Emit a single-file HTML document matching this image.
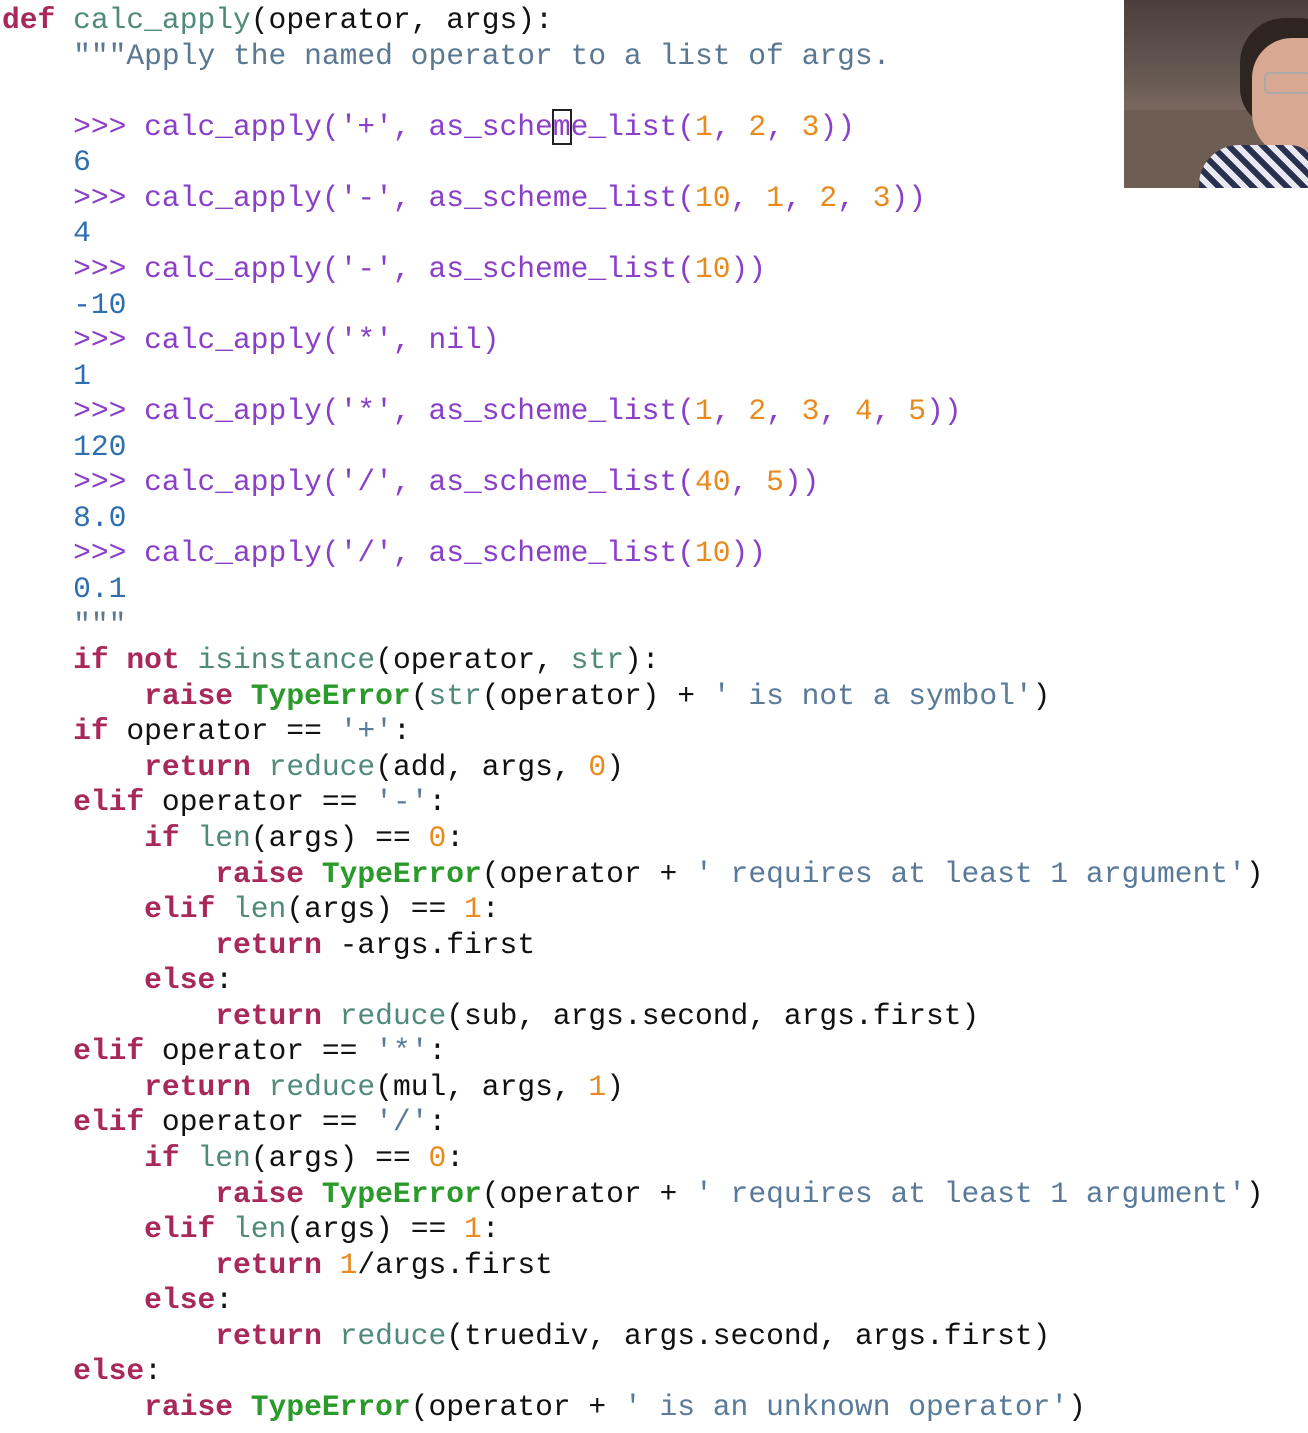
<!DOCTYPE html>
<html><head><meta charset="utf-8"><style>
html,body{margin:0;padding:0;background:#fff;}
body{width:1308px;height:1433px;overflow:hidden;position:relative;}
pre{margin:0;position:absolute;left:2px;top:3px;font-family:"Liberation Mono",monospace;font-size:29.62px;line-height:35.56px;color:#111;}
.k{color:#a8285a;font-weight:bold}
.f{color:#4f8a7a}
.d{color:#5a7892}
.p{color:#8a3fc8}
.o{color:#2e6fb0}
.n{color:#e88a1e}
.t{color:#2a9a2a;font-weight:bold}
.s{color:#5a7a9a}
.cur{outline:2px solid #222;outline-offset:-1px}
#cam{position:absolute;left:1124px;top:0;width:184px;height:188px;overflow:hidden;background:linear-gradient(180deg,#4a3f3c 0%,#6a5c55 45%,#7b6a60 60%,#6b5a50 100%);}
</style></head><body>
<pre><span class="k">def</span> <span class="f">calc_apply</span>(operator, args):
    <span class="d">"""Apply the named operator to a list of args.</span>

    <span class="p">&gt;&gt;&gt; calc_apply('+', as_sche<span class="cur">m</span>e_list(</span><span class="n">1</span><span class="p">, </span><span class="n">2</span><span class="p">, </span><span class="n">3</span><span class="p">))</span>
    <span class="o">6</span>
    <span class="p">&gt;&gt;&gt; calc_apply('-', as_scheme_list(</span><span class="n">10</span><span class="p">, </span><span class="n">1</span><span class="p">, </span><span class="n">2</span><span class="p">, </span><span class="n">3</span><span class="p">))</span>
    <span class="o">4</span>
    <span class="p">&gt;&gt;&gt; calc_apply('-', as_scheme_list(</span><span class="n">10</span><span class="p">))</span>
    <span class="o">-10</span>
    <span class="p">&gt;&gt;&gt; calc_apply('*', nil)</span>
    <span class="o">1</span>
    <span class="p">&gt;&gt;&gt; calc_apply('*', as_scheme_list(</span><span class="n">1</span><span class="p">, </span><span class="n">2</span><span class="p">, </span><span class="n">3</span><span class="p">, </span><span class="n">4</span><span class="p">, </span><span class="n">5</span><span class="p">))</span>
    <span class="o">120</span>
    <span class="p">&gt;&gt;&gt; calc_apply('/', as_scheme_list(</span><span class="n">40</span><span class="p">, </span><span class="n">5</span><span class="p">))</span>
    <span class="o">8.0</span>
    <span class="p">&gt;&gt;&gt; calc_apply('/', as_scheme_list(</span><span class="n">10</span><span class="p">))</span>
    <span class="o">0.1</span>
    <span class="d">"""</span>
    <span class="k">if</span> <span class="k">not</span> <span class="f">isinstance</span>(operator, <span class="f">str</span>):
        <span class="k">raise</span> <span class="t">TypeError</span>(<span class="f">str</span>(operator) + <span class="s">' is not a symbol'</span>)
    <span class="k">if</span> operator == <span class="s">'+'</span>:
        <span class="k">return</span> <span class="f">reduce</span>(add, args, <span class="n">0</span>)
    <span class="k">elif</span> operator == <span class="s">'-'</span>:
        <span class="k">if</span> <span class="f">len</span>(args) == <span class="n">0</span>:
            <span class="k">raise</span> <span class="t">TypeError</span>(operator + <span class="s">' requires at least 1 argument'</span>)
        <span class="k">elif</span> <span class="f">len</span>(args) == <span class="n">1</span>:
            <span class="k">return</span> -args.first
        <span class="k">else</span>:
            <span class="k">return</span> <span class="f">reduce</span>(sub, args.second, args.first)
    <span class="k">elif</span> operator == <span class="s">'*'</span>:
        <span class="k">return</span> <span class="f">reduce</span>(mul, args, <span class="n">1</span>)
    <span class="k">elif</span> operator == <span class="s">'/'</span>:
        <span class="k">if</span> <span class="f">len</span>(args) == <span class="n">0</span>:
            <span class="k">raise</span> <span class="t">TypeError</span>(operator + <span class="s">' requires at least 1 argument'</span>)
        <span class="k">elif</span> <span class="f">len</span>(args) == <span class="n">1</span>:
            <span class="k">return</span> <span class="n">1</span>/args.first
        <span class="k">else</span>:
            <span class="k">return</span> <span class="f">reduce</span>(truediv, args.second, args.first)
    <span class="k">else</span>:
        <span class="k">raise</span> <span class="t">TypeError</span>(operator + <span class="s">' is an unknown operator'</span>)</pre>
<div id="cam">
  <div style="position:absolute;left:0;top:110px;width:184px;height:78px;background:#6e5d52"></div>
  <div style="position:absolute;left:116px;top:18px;width:90px;height:110px;border-radius:45px 30px 20px 40px;background:#2e2420"></div>
  <div style="position:absolute;left:128px;top:38px;width:80px;height:120px;border-radius:40px 20px 30px 45px;background:#d9a892"></div>
  <div style="position:absolute;left:140px;top:72px;width:44px;height:18px;border:2px solid #aaa;border-radius:6px;"></div>
  <div style="position:absolute;left:75px;top:145px;width:120px;height:60px;border-radius:40px 30px 0 0;background:repeating-linear-gradient(45deg,#2a3050 0 6px,#e8e8f0 6px 12px)"></div>
</div>
</body></html>
